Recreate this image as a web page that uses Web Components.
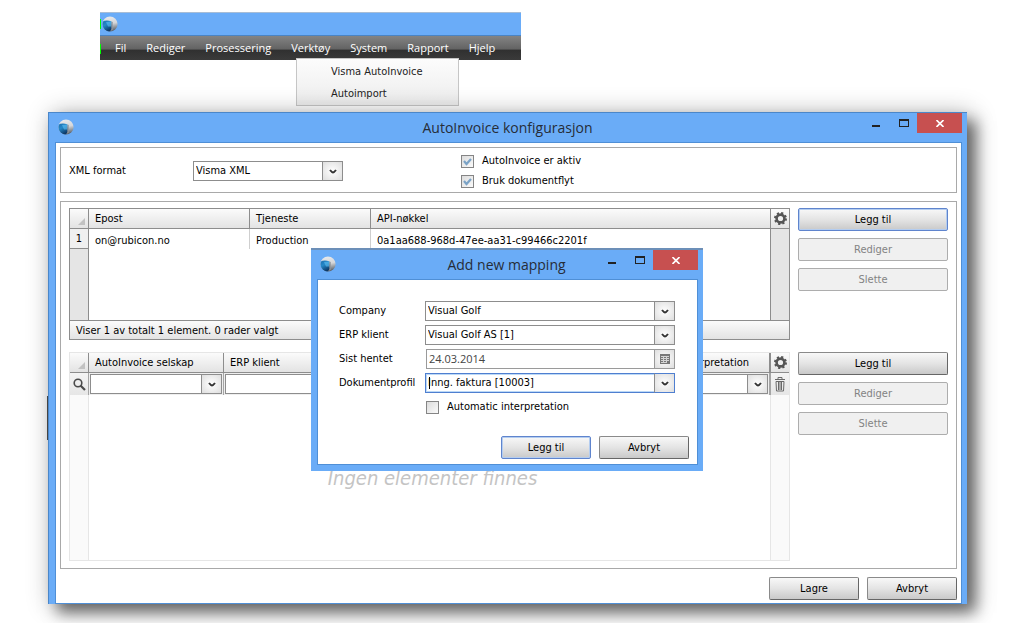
<!DOCTYPE html>
<html lang="no">
<head>
<meta charset="utf-8">
<title>AutoInvoice konfigurasjon</title>
<style>
  body {
    display: flow-root;
    margin: 0;
    padding-bottom: 18px;
    background: #fff;
    color: #000;
    font: 11px/14px "DejaVu Sans Condensed", "DejaVu Sans", sans-serif;
  }
  app-menu { margin: 12px 0 0 100px; }
  win-frame.main { margin: 52px 43px 0 48px; }
  .top { display: grid; grid-template-columns: 392px 1fr; align-items: center; }
  .top form-field { --label-width: 124px; width: 274px; }
  .checks { display: grid; gap: 6px; }
  .section { display: grid; grid-template-columns: 1fr 150px; gap: 8px; }
  .section + .section { margin-top: 12px; }
  .stack { display: grid; gap: 7px; align-content: start; }
  .footer { display: flex; justify-content: flex-end; gap: 8px; margin-top: 8px; }
  .footer push-button { width: 90px; }
  win-frame.modal {
    position: absolute;
    top: 135px;
    left: 0;
    right: 2px;
    width: 392px;
    margin: 0 auto;
  }
  .fields { display: grid; gap: 4px; padding: 21px 22px 0 21px; }
  .fields check-box { margin: 3px 0 0 87px; }
  .modal .footer { margin: 22px 8px 5px 0; }
</style>
</head>
<body>

<app-menu></app-menu>

<win-frame class="main" heading="AutoInvoice konfigurasjon">
  <group-panel style="--pad: 6px 8px 4px">
    <div class="top">
      <form-field label="XML format" value="Visma XML"></form-field>
      <div class="checks">
        <check-box label="AutoInvoice er aktiv" checked disabled></check-box>
        <check-box label="Bruk dokumentflyt" checked disabled></check-box>
      </div>
    </div>
  </group-panel>

  <group-panel style="--pad: 6px 8px 7px; margin-top: 8px">
    <div class="section">
      <account-grid></account-grid>
      <div class="stack">
        <push-button primary>Legg til</push-button>
        <push-button disabled>Rediger</push-button>
        <push-button disabled>Slette</push-button>
      </div>
    </div>
    <div class="section">
      <mapping-grid></mapping-grid>
      <div class="stack">
        <push-button>Legg til</push-button>
        <push-button disabled>Rediger</push-button>
        <push-button disabled>Slette</push-button>
      </div>
    </div>
  </group-panel>

  <div class="footer">
    <push-button>Lagre</push-button>
    <push-button>Avbryt</push-button>
  </div>

  <win-frame class="modal" slot="modal" heading="Add new mapping">
    <div class="fields">
      <form-field label="Company" value="Visual Golf"></form-field>
      <form-field label="ERP klient" value="Visual Golf AS [1]"></form-field>
      <form-field label="Sist hentet" value="24.03.2014" kind="date"></form-field>
      <form-field label="Dokumentprofil" value="Inng. faktura [10003]" active></form-field>
      <check-box label="Automatic interpretation"></check-box>
    </div>
    <div class="footer">
      <push-button primary>Legg til</push-button>
      <push-button>Avbryt</push-button>
    </div>
  </win-frame>
</win-frame>

<script>
const define = (name, render) => customElements.define(name, class extends HTMLElement {
  connectedCallback() {
    if (this.shadowRoot) return;
    this.attachShadow({ mode: 'open' }).innerHTML =
      '<style>*{box-sizing:border-box}:host{display:block}</style>' + render(this);
  }
});

/* Round application logo */
define('app-orb', () => `
<style>:host{width:16px;height:16px} svg{display:block}</style>
<svg width="16" height="16" viewBox="0 0 16 16" aria-hidden="true">
  <defs>
    <linearGradient id="s" x1=".3" y1="0" x2=".5" y2="1"><stop offset="0" stop-color="#e9eaec"/><stop offset=".5" stop-color="#d5d7da"/><stop offset="1" stop-color="#555d66"/></linearGradient>
    <linearGradient id="b" x1="0" y1="0" x2=".5" y2="1"><stop offset="0" stop-color="#1f6fae"/><stop offset=".45" stop-color="#2488c9"/><stop offset="1" stop-color="#0c3765"/></linearGradient>
    <clipPath id="c"><circle cx="8" cy="8" r="7.6"/></clipPath>
  </defs>
  <circle cx="8" cy="8" r="7.6" fill="url(#s)"/>
  <g clip-path="url(#c)">
    <path d="M0 6Q4 3.500 9.500 5.500V12.500Q9 14.500 7 16H0Z" fill="url(#b)"/>
    <path d="M4 6L9 5.500V10.500H6Z" fill="#5bbcf0" opacity=".65"/>
    <path d="M9.500 5.500V12.500L8.500 15L11 14V6Z" fill="#8b939b" opacity=".7"/>
  </g>
</svg>`);

/* Main application strip: title bar, menu bar and the open drop-down */
define('app-menu', () => `
<style>
  :host{width:421px;position:relative}
  .bar{height:24px;padding:0 2px;display:flex;align-items:center;background:#6aacf8;border-top:1px solid #a7bdd6;border-bottom:1px solid #4a84c4}
  nav{height:24px;display:flex;align-items:center;gap:20px;padding-left:15px;
      background:linear-gradient(#848484,#636363 55%,#303030 58%,#3a3a3a)}
  a{color:#fff;text-decoration:none;font:11px/16px "Open Sans",sans-serif}
  .bar::after,nav::after{content:"";position:absolute;left:0;width:1px;height:10px;background:#0f0}
  .bar::after{top:7px} nav::after{top:32px}
  .menu{position:absolute;left:196px;top:46px;width:163px;height:48px;display:grid;grid-template-rows:22px 22px;padding:2px 0 2px 34px;align-items:center;
      background:linear-gradient(#fcfcfc,#ededed);border:1px solid #c6c6c6}
  .menu a{color:#222;font:11px/14px "DejaVu Sans Condensed",sans-serif}
</style>
<div class="bar"><app-orb></app-orb></div>
<nav>${['Fil', 'Rediger', 'Prosessering', 'Verktøy', 'System', 'Rapport', 'Hjelp'].map(t => `<a href="#">${t}</a>`).join('')}</nav>
<div class="menu"><a href="#">Visma AutoInvoice</a><a href="#">Autoimport</a></div>`);

/* Window with title bar, caption buttons and a slotted client area */
define('win-frame', el => `
<style>
  :host{position:relative;background:#6aacf7;border:1px solid #4b87c9;border-width:1px 0 0 1px;
        box-shadow:9px 9px 14px rgba(0,0,0,.5),4px 2px 24px rgba(0,0,0,.3)}
  :host(.main)::before{content:"";position:absolute;left:-2px;top:283px;width:1px;height:44px;background:#444}
  :host(.modal){border-width:2px 0 0 0;border-color:#6c8fb8;box-shadow:none}
  header{display:grid;grid-template-columns:1fr auto 1fr;align-items:start;height:29px;padding:0 5px 0 4px}
  app-orb{margin:6px 0 0 5px}
  h1{margin:4px 0 0;font:14px/22px "Open Sans",sans-serif;color:#262d38}
  .caps{display:flex;justify-content:flex-end}
  button{border:0;padding:0;background:none;width:27px;height:20px;display:grid;place-items:center}
  .close{background:#c75050;width:45px}
  .client{margin:0 5px 3px 6px;border:1px solid #4f8fd6;background:#fff;padding:4px 4px 3px}
  :host(.modal) .client{margin:0 5px 6px 6px;padding:0}
  svg{display:block}
</style>
<header>
  <app-orb></app-orb><h1>${el.getAttribute('heading')}</h1>
  <div class="caps">
    <button aria-label="Minimize"><svg width="9" height="10"><path d="M0 7h8v2h-8z" fill="#222"/></svg></button>
    <button aria-label="Maximize"><svg width="10" height="8"><path d="M0 0h10v8h-10zM1 2v5h8v-5z" fill="#222" fill-rule="evenodd"/></svg></button>
    <button class="close" aria-label="Close"><svg width="8" height="7"><path d="M.5 0L7.500 7M7.500 0L.5 7" stroke="#fff" stroke-width="1.600"/></svg></button>
  </div>
</header>
<div class="client"><slot></slot></div>
<slot name="modal"></slot>`);

define('group-panel', () => `
<style>:host{border:1px solid #a9a9a9;padding:var(--pad)}</style><slot></slot>`);

define('push-button', el => `
<style>
  button{display:block;width:100%;height:23px;padding:0;font:inherit;color:#000;border:1px solid #8a8a8a;border-right-color:#666;border-bottom-color:#666;border-radius:2px;
    background:linear-gradient(#f8f8f8,#e4e4e4 50%,#c9c9c9)}
  :host([primary]) button{border-color:#5f84cd;box-shadow:inset 0 0 0 1px #b4cdf0}
  button:disabled{color:#838383;border-color:#adadad;background:#f0f0f0}
</style>
<button type="button" ${el.hasAttribute('disabled') ? 'disabled' : ''}><slot></slot></button>`);

/* Drop-down list with its own arrow cell */
define('drop-down', el => `
<style>
  :host{display:grid}
  select,i{grid-area:1/1}
  select{appearance:none;width:100%;height:20px;margin:0;padding:0 22px 0 2px;border:1px solid #8d8d8d;border-radius:0;background:#fff;font:inherit;color:#000}
  i{justify-self:end;width:21px;height:20px;display:grid;place-items:center;pointer-events:none;border:1px solid #8d8d8d;background:radial-gradient(#fff,#dedede)}
  :host([active]) select{border-color:#4f7fd0;box-shadow:inset 0 0 0 1px #bcd9f7}
  :host([active]) i{border-color:#4f7fd0;border-left-color:#8d8d8d}
</style>
<select aria-label="${el.getAttribute('label') || ''}"><option>${el.getAttribute('value') || ''}</option></select>
<i><svg width="8" height="5"><path d="M1 1Q3 3.500 4 3.500T7 1" fill="none" stroke="#333" stroke-width="2"/></svg></i>`);

/* Label and control on one line */
define('form-field', el => {
  const label = el.getAttribute('label'), value = el.getAttribute('value');
  const date = el.getAttribute('kind') === 'date';
  const active = el.hasAttribute('active');
  return `
<style>
  .row{display:grid;grid-template-columns:var(--label-width,86px) 1fr;align-items:center}
  .date{display:grid;grid-template-columns:1fr 20px;height:20px;border:1px solid #9a9a9a;margin-left:1px}
  input{min-width:0;border:0;padding:0 2px;font:11px/14px "Open Sans",sans-serif;color:#444;background:#fff}
  .date button{padding:0;border:0;border-left:1px solid #9a9a9a;background:radial-gradient(#fff,#dedede);display:grid;place-items:center}
  .ctl{position:relative}
  .caret{position:absolute;left:4px;top:4px;width:1px;height:12px;background:#000}
</style>
<label class="row"><span>${label}</span><span class="ctl">${date
  ? `<span class="date"><input value="${value}"><button type="button" aria-label="Kalender"><svg width="10" height="10"><path d="M0 0h10v10h-10z" fill="#777"/><path d="M1 2.500h8M1 4.500h8M1 6.500h8M1 8.500h5M3.500 2v7M6.500 2v7" stroke="#d4d4d4" stroke-width="1" fill="none"/></svg></button></span>`
  : `<drop-down label="${label}" value="${value}" ${active ? 'active' : ''}></drop-down>`}${active ? '<span class="caret"></span>' : ''}</span></label>`;
});

define('check-box', el => `
<style>
  label{display:flex;align-items:center;gap:8px;height:14px}
  input{appearance:none;flex:none;width:13px;height:13px;margin:0;border:1px solid #858585;background:linear-gradient(135deg,#dcdcdc,#fafafa)}
  .box{display:grid} .box>*{grid-area:1/1}
  svg{pointer-events:none}
</style>
<label><span class="box"><input type="checkbox" ${el.hasAttribute('checked') ? 'checked' : ''} ${el.hasAttribute('disabled') ? 'disabled' : ''}>
${el.hasAttribute('checked') ? '<svg width="13" height="13"><path d="M3 6L5.500 9L10 4" fill="none" stroke="#7ba3c6" stroke-width="2.200"/></svg>' : ''}</span>${el.getAttribute('label')}</label>`);

define('gear-icon', () => `
<style>:host{width:13px;height:13px;margin:0 auto} svg{display:block}</style>
<svg width="13" height="13" viewBox="0 0 13 13"><circle cx="6.500" cy="6.500" r="5.500" fill="none" stroke="#555" stroke-width="2" stroke-dasharray="2.160 2.160"/><circle cx="6.500" cy="6.500" r="3.900" fill="none" stroke="#555" stroke-width="2.600"/></svg>`);

const gridStyle = `
  table{width:100%;table-layout:fixed;border-collapse:separate;border-spacing:0}
  th,td{padding:0;font-weight:400;text-align:left;white-space:nowrap;overflow:hidden}
  th{height:20px;padding-left:6px;background:linear-gradient(#fbfbfb,#e3e3e3);border-right:1px solid #8d8d8d;border-bottom:1px solid #8d8d8d}
  th.icon,td.icon{padding:0}
  .corner{padding:0}
  .corner svg{display:block;margin:5px 3px 0 auto}`;
const corner = '<th class="corner"><svg width="7" height="7"><path d="M7 0v7h-7z" fill="#c2c2c2"/></svg></th>';

define('account-grid', () => `
<style>${gridStyle}
  :host{border:1px solid #8d8d8d}
  td{height:20px;padding:3px 0 0 6px;border-right:1px solid #cfcfcf}
  th:last-child,td:last-child{border-right:0}
  .num{padding:0;text-align:center;background:#f0f0f0;border-right-color:#8d8d8d;border-bottom:1px solid #8d8d8d}
  .side{background:#e5e5e5;border-right-color:#8d8d8d}
  .key{border-right-color:#8d8d8d}
  .fill td{height:71px}
  .fill td:nth-child(2){border-right-color:#8d8d8d}
  footer{height:19px;padding-left:6px;line-height:19px;border-top:1px solid #8d8d8d;background:linear-gradient(#fbfbfb,#e3e3e3)}
</style>
<table>
  <colgroup><col style="width:19px"><col style="width:161px"><col style="width:121px"><col><col style="width:18px"></colgroup>
  <thead><tr>${corner}<th>Epost</th><th>Tjeneste</th><th>API-nøkkel</th><th class="icon"><gear-icon></gear-icon></th></tr></thead>
  <tbody>
    <tr><td class="num">1</td><td>on@rubicon.no</td><td>Production</td><td class="key">0a1aa688-968d-47ee-aa31-c99466c2201f</td><td class="side"></td></tr>
    <tr class="fill"><td class="side"></td><td colspan="3"></td><td class="side"></td></tr>
  </tbody>
</table>
<footer>Viser 1 av totalt 1 element. 0 rader valgt</footer>`);

define('mapping-grid', () => `
<style>${gridStyle}
  :host{border:1px solid #e6e6e6}
  th:last-child,td:last-child{border-right:0}
  th:nth-last-child(2){border-right-width:2px}
  .filter td{height:22px;padding:1px;background:#efefef;border-right:1px solid #a5a5a5}
  .filter td:nth-child(4){border-right-width:2px}
  .filter td.icon{padding:0;background:linear-gradient(#f4f4f4,#e6e6e6)}
  .filter td:last-child{border-right:0}
  .icon svg{display:block;margin:0 auto}
  input{display:block;width:100%;height:20px;border:1px solid #8d8d8d;padding:0 3px;font:inherit}
  .fill td{height:165px;border-right:1px solid #e6e6e6}
  .fill .side{background:#fafafa}
  .fill td:last-child{border-right:0}
  .fill .none{padding-left:6px;text-align:center;font:italic 20px/24px "DejaVu Sans Condensed",sans-serif;color:#c4c4c4}
</style>
<table>
  <colgroup><col style="width:19px"><col style="width:135px"><col><col style="width:150px"><col style="width:18px"></colgroup>
  <thead><tr>${corner}<th>AutoInvoice selskap</th><th>ERP klient</th><th>Automatic interpretation</th><th class="icon"><gear-icon></gear-icon></th></tr></thead>
  <tbody>
    <tr class="filter">
      <td class="icon"><svg width="13" height="13"><circle cx="5" cy="5" r="3.800" fill="none" stroke="#4a4a4a" stroke-width="1.600"/><path d="M7.500 7.500L12 12" stroke="#4a4a4a" stroke-width="2.200"/></svg></td>
      <td><drop-down label="AutoInvoice selskap"></drop-down></td>
      <td><input aria-label="ERP klient"></td>
      <td><drop-down label="Automatic interpretation"></drop-down></td>
      <td class="icon"><svg width="12" height="15"><path d="M1 2.500h10M4 2V.5h4V2M2 4.500h8L9.500 14h-7zM4.500 5v8M6 5v8M7.500 5v8" fill="none" stroke="#6a6a6a"/></svg></td>
    </tr>
    <tr class="fill"><td class="side"></td><td class="none" colspan="3">Ingen elementer finnes</td><td class="side"></td></tr>
  </tbody>
</table>`);
</script>
</body>
</html>
